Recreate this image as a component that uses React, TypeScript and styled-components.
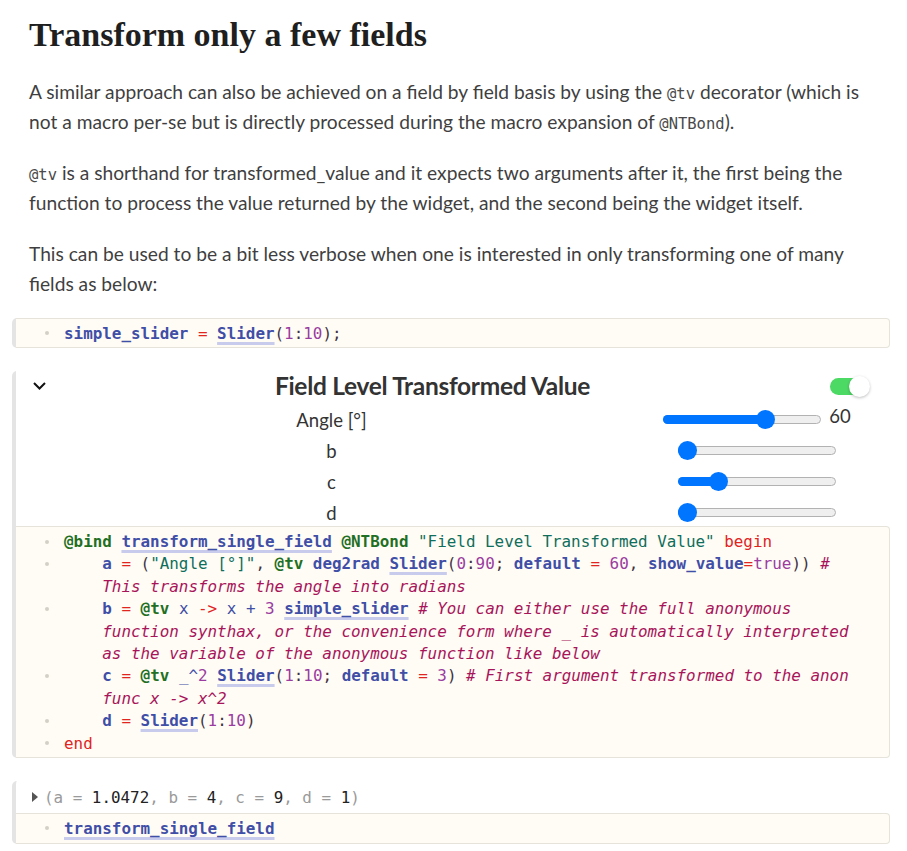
import React from "react";
import styled, { createGlobalStyle, css } from "styled-components";

const Global = createGlobalStyle`
  html, body { margin: 0; padding: 0; background: #ffffff; }
  body { font-family: "Lato", "Noto Sans", sans-serif; }
`;

const Page = styled.main`
  width: 907px;
  box-sizing: border-box;
  padding: 14px 17px 0 12px;
`;

const Heading = styled.h1`
  margin: 0 0 21px 17px;
  font-family: "Liberation Serif", serif;
  font-weight: 700;
  font-size: 34px;
  line-height: 42px;
  color: #1f1f1f;
`;

const Para = styled.p`
  margin: 0 0 22px 17px;
  font-family: "Lato", sans-serif;
  font-size: 19.2px;
  line-height: 29.5px;
  color: #3f3f3f;
`;

const InlineCode = styled.code`
  font-family: "DejaVu Sans Mono", monospace;
  font-size: 15.5px;
  line-height: 1;
  color: #4a4a4a;
`;

const Notebook = styled.div`
  display: flex;
  flex-direction: column;
  gap: 23px;
  margin-top: -2px;
`;

const Cell = styled.section`
  display: flex;
  flex-direction: column;
  border-left: 4px solid #e4e4e4;
  border-radius: 5px 0 0 5px;
`;

const CodeBox = styled.div<{ $overlap?: boolean }>`
  position: relative;
  background: #fffcf5;
  border: 1px solid #e6e3da;
  border-left: none;
  border-radius: 0 4px 4px 0;
  padding: 3px 0 3px 0;
  ${(p) =>
    p.$overlap &&
    css`
      margin-top: -2px;
    `}
`;

const CodeLine = styled.div`
  display: flex;
  height: 22.4px;
  align-items: center;
  font-family: "DejaVu Sans Mono", monospace;
  font-size: 15.9px;
  white-space: pre;
  color: #41323f;
`;

const Gutter = styled.span`
  width: 48px;
  flex: none;
  display: flex;
  justify-content: flex-start;
  padding-left: 29px;
  box-sizing: border-box;
`;

const Dot = styled.span`
  width: 4px;
  height: 4px;
  border-radius: 50%;
  background: #d4d0c8;
`;

type Kind = "macro" | "var" | "link" | "op" | "str" | "num" | "kw" | "comment" | "punct" | "plain";

const kindStyles: Record<Kind, ReturnType<typeof css>> = {
  macro: css`color: #1f6f24; font-weight: 700;`,
  var: css`color: #3f4ea6; font-weight: 700;`,
  link: css`
    color: #3f4ea6;
    font-weight: 700;
    text-decoration: underline;
    text-decoration-color: #c8cbec;
    text-decoration-thickness: 3px;
    text-underline-offset: 3px;
  `,
  op: css`color: #e0241f;`,
  str: css`color: #0f6e5c;`,
  num: css`color: #9a3ca0;`,
  kw: css`color: #e0241f;`,
  comment: css`color: #a8145a; font-style: italic;`,
  punct: css`color: #41323f;`,
  plain: css`color: #3f4ea6;`,
};

const Tok = styled.span<{ $k: Kind }>`
  ${(p) => kindStyles[p.$k]}
`;

type T = [Kind, string];
type Line = { dot: boolean; toks: T[] };

const S: T = ["punct", " "];
const IND: T = ["punct", "    "];

const mainCode: Line[] = [
  {
    dot: true,
    toks: [
      ["macro", "@bind"], S, ["link", "transform_single_field"], S, ["macro", "@NTBond"], S,
      ["str", "\"Field Level Transformed Value\""], S, ["kw", "begin"],
    ],
  },
  {
    dot: true,
    toks: [
      IND, ["var", "a"], S, ["op", "="], S, ["punct", "("], ["str", "\"Angle [°]\""], ["punct", ","], S,
      ["macro", "@tv"], S, ["var", "deg2rad"], S, ["link", "Slider"], ["punct", "("], ["num", "0"],
      ["punct", ":"], ["num", "90"], ["punct", ";"], S, ["var", "default"], S, ["op", "="], S,
      ["num", "60"], ["punct", ","], S, ["var", "show_value"], ["op", "="], ["num", "true"],
      ["punct", "))"], S, ["comment", "#"],
    ],
  },
  { dot: false, toks: [IND, ["comment", "This transforms the angle into radians"]] },
  {
    dot: true,
    toks: [
      IND, ["var", "b"], S, ["op", "="], S, ["macro", "@tv"], S, ["plain", "x"], S, ["op", "->"], S,
      ["plain", "x"], S, ["plain", "+"], S, ["num", "3"], S, ["link", "simple_slider"], S,
      ["comment", "# You can either use the full anonymous"],
    ],
  },
  {
    dot: false,
    toks: [IND, ["comment", "function synthax, or the convenience form where _ is automatically interpreted"]],
  },
  { dot: false, toks: [IND, ["comment", "as the variable of the anonymous function like below"]] },
  {
    dot: true,
    toks: [
      IND, ["var", "c"], S, ["op", "="], S, ["macro", "@tv"], S, ["plain", "_"], ["plain", "^"], ["num", "2"], S,
      ["link", "Slider"], ["punct", "("], ["num", "1"], ["punct", ":"], ["num", "10"], ["punct", ";"], S,
      ["var", "default"], S, ["op", "="], S, ["num", "3"], ["punct", ")"], S,
      ["comment", "# First argument transformed to the anon"],
    ],
  },
  { dot: false, toks: [IND, ["comment", "func x -> x^2"]] },
  {
    dot: true,
    toks: [IND, ["var", "d"], S, ["op", "="], S, ["link", "Slider"], ["punct", "("], ["num", "1"], ["punct", ":"], ["num", "10"], ["punct", ")"]],
  },
  { dot: true, toks: [["kw", "end"]] },
];

const Code: React.FC<{ lines: Line[]; overlap?: boolean }> = ({ lines, overlap }) => (
  <CodeBox $overlap={overlap}>
    {lines.map((l, i) => (
      <CodeLine key={i}>
        <Gutter>{l.dot && <Dot />}</Gutter>
        <span>
          {l.toks.map(([k, v], j) => (
            <Tok key={j} $k={k}>
              {v}
            </Tok>
          ))}
        </span>
      </CodeLine>
    ))}
  </CodeBox>
);

/* ---------- widget output ---------- */

const Output = styled.div`
  display: flex;
  flex-direction: column;
  background: #fff;
`;

const Header = styled.div`
  display: flex;
  align-items: center;
  height: 30px;
  margin-bottom: 3px;
  padding: 0 22px 0 16px;
`;

const Chevron = styled.svg`
  width: 15px;
  height: 10px;
  flex: none;
`;

const Title = styled.div`
  flex: 1;
  text-align: center;
  padding-right: 12px;
  font-family: "Lato", sans-serif;
  font-weight: 700;
  font-size: 24.5px;
  line-height: 30px;
  color: #333;
  letter-spacing: -0.3px;
`;

const Toggle = styled.div`
  position: relative;
  width: 38px;
  height: 17px;
  border-radius: 9px;
  background: #4cd964;
  flex: none;
`;

const Knob = styled.span`
  position: absolute;
  right: -2px;
  top: -2px;
  width: 21px;
  height: 21px;
  border-radius: 50%;
  background: #fff;
  box-shadow: 0 1px 3px rgba(0, 0, 0, 0.25);
`;

const Grid = styled.div`
  display: grid;
  grid-template-columns: 631px 220px;
  grid-auto-rows: 31px;
  align-items: center;
`;

const Label = styled.div`
  text-align: center;
  font-family: "Lato", sans-serif;
  font-size: 18.5px;
  color: #333;
`;

const WidgetCell = styled.div`
  display: flex;
  align-items: center;
  justify-content: center;
  gap: 8px;
`;

const Track = styled.div`
  position: relative;
  width: 158px;
  height: 9px;
  box-sizing: border-box;
  border: 1px solid #b2b2b2;
  border-radius: 5px;
  background: #efefef;
`;

const Fill = styled.div`
  position: absolute;
  left: -1px;
  top: -1px;
  height: 9px;
  border-radius: 5px;
  background: #0075ff;
`;

const Thumb = styled.div`
  position: absolute;
  top: 50%;
  width: 19px;
  height: 19px;
  margin-top: -9.5px;
  margin-left: -9.5px;
  border-radius: 50%;
  background: #0075ff;
`;

const ValueText = styled.span`
  font-family: "Lato", sans-serif;
  font-size: 18.5px;
  color: #333;
  margin-top: -8px;
`;

const SliderView: React.FC<{ frac: number }> = ({ frac }) => {
  const center = 9.5 + frac * (158 - 19);
  return (
    <Track>
      <Fill style={{ width: center + 1 }} />
      <Thumb style={{ left: center - 1 }} />
    </Track>
  );
};

/* ---------- tree output ---------- */

const TreeOut = styled.div`
  display: flex;
  align-items: center;
  height: 32px;
  padding-left: 16px;
  font-family: "DejaVu Sans Mono", monospace;
  font-size: 15.9px;
  white-space: pre;
  color: #222;
`;

const Caret = styled.span`
  width: 0;
  height: 0;
  border-top: 5px solid transparent;
  border-bottom: 5px solid transparent;
  border-left: 6px solid #555;
  margin-right: 6px;
`;

const Key = styled.span`
  color: #9a9a9a;
`;

export default function App() {
  return (
    <>
      <Global />
      <Page>
        <Heading>Transform only a few fields</Heading>
        <Para>
          A similar approach can also be achieved on a field by field basis by using the <InlineCode>@tv</InlineCode>{" "}
          decorator (which is not a macro per-se but is directly processed during the macro expansion of{" "}
          <InlineCode>@NTBond</InlineCode>).
        </Para>
        <Para>
          <InlineCode>@tv</InlineCode> is a shorthand for transformed_value and it expects two arguments after it, the
          first being the function to process the value returned by the widget, and the second being the widget itself.
        </Para>
        <Para>
          This can be used to be a bit less verbose when one is interested in only transforming one of many fields as
          below:
        </Para>

        <Notebook>
          <Cell>
            <Code
              lines={[
                {
                  dot: true,
                  toks: [
                    ["var", "simple_slider"], S, ["op", "="], S, ["link", "Slider"], ["punct", "("], ["num", "1"],
                    ["punct", ":"], ["num", "10"], ["punct", ");"],
                  ],
                },
              ]}
            />
          </Cell>

          <Cell>
            <Output>
              <Header>
                <Chevron viewBox="0 0 15 10">
                  <polyline points="2,2 7.5,7.5 13,2" fill="none" stroke="#111" strokeWidth="2" />
                </Chevron>
                <Title>Field Level Transformed Value</Title>
                <Toggle>
                  <Knob />
                </Toggle>
              </Header>
              <Grid>
                <Label>Angle [°]</Label>
                <WidgetCell>
                  <SliderView frac={60 / 90} />
                  <ValueText>60</ValueText>
                </WidgetCell>
                <Label>b</Label>
                <WidgetCell>
                  <SliderView frac={0} />
                </WidgetCell>
                <Label>c</Label>
                <WidgetCell>
                  <SliderView frac={2 / 9} />
                </WidgetCell>
                <Label>d</Label>
                <WidgetCell>
                  <SliderView frac={0} />
                </WidgetCell>
              </Grid>
            </Output>
            <Code overlap lines={mainCode} />
          </Cell>

          <Cell>
            <TreeOut>
              <Caret />
              <Key>(a = </Key>1.0472<Key>, b = </Key>4<Key>, c = </Key>9<Key>, d = </Key>1<Key>)</Key>
            </TreeOut>
            <Code lines={[{ dot: true, toks: [["link", "transform_single_field"]] }]} />
          </Cell>
        </Notebook>
      </Page>
    </>
  );
}
